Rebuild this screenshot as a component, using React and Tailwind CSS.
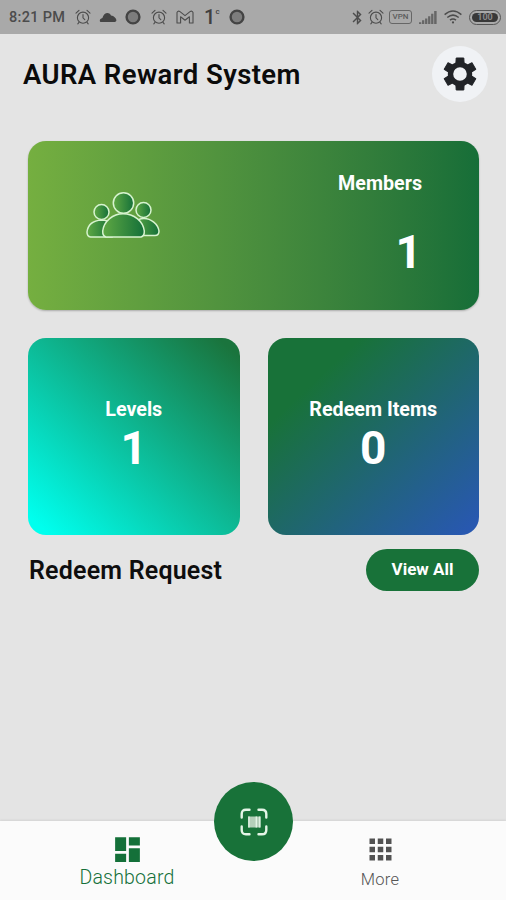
import { MdDashboard, MdApps, MdBluetooth } from "react-icons/md";

const TEETH = [0, 60, 120, 180, 240, 300];

function AlarmIcon({ className }) {
  return (
    <svg viewBox="0 0 16 16" className={className} fill="none" stroke="currentColor" strokeWidth="1.1" strokeLinecap="round">
      <circle cx="8" cy="8.7" r="5.6" />
      <path d="M1 4.2 L4 1.4 M15 4.2 L12 1.4 M8 5.6 V8.8 L9.8 10.6 M4 13.4 L2.8 14.8 M12 13.4 L13.2 14.8" />
    </svg>
  );
}

function RingIcon() {
  return (
    <svg viewBox="0 0 16 16" className="size-4">
      <circle cx="8" cy="8" r="6.4" fill="#7d7d7d" stroke="#444" strokeWidth="2.4" />
    </svg>
  );
}

function GearIcon() {
  return (
    <svg viewBox="-18 -18 36 36" className="size-9">
      <g fill="#212327" stroke="#212327" strokeWidth="1" strokeLinejoin="round">
        {TEETH.map((deg) => (
          <path key={deg} d="M-4.2 -9 L-3.8 -16 H3.8 L4.2 -9Z" transform={`rotate(${deg})`} />
        ))}
      </g>
      <circle r="9.5" fill="none" stroke="#212327" strokeWidth="5.4" />
    </svg>
  );
}

function StatusBar() {
  return (
    <div className="flex h-[34px] items-center justify-between bg-[#a9a9a9] pl-[9px] pr-[5px] text-[#4c4c4c]">
      <div className="flex items-center">
        <span className="w-[66px] whitespace-nowrap pt-[2px] text-[14.5px] font-medium tracking-[0.3px]">8:21 PM</span>
        <AlarmIcon className="size-4" />
        <svg viewBox="0 0 18 10" className="ml-2 mr-2 h-[10px] w-[18px]" fill="#444">
          <path d="M1.5 10 C0 9 1 6.5 3.4 6 C4.6 1 9.6 -1 12 3.4 C15 3.6 17 6 17.4 8 Q17.6 9.6 16 10Z" />
        </svg>
        <RingIcon />
        <AlarmIcon className="ml-[10px] size-4" />
        <svg viewBox="0 0 18 14" className="ml-[9px] h-[14px] w-[18px]" fill="none" stroke="currentColor" strokeWidth="1.1" strokeLinejoin="round">
          <path d="M1 13 V2.4 Q2 .4 4 1.6 L9 5.6 L14 1.6 Q16 .4 17 2.4 V13 H13.4 V6.8 L9 10.2 L4.6 6.8 V13Z" />
        </svg>
        <span className="ml-[10px] flex w-[14px] items-start text-[20px] font-medium leading-[18px] text-[#404040]">
          1<span className="text-[8px] leading-[8px]">c</span>
        </span>
        <div className="ml-[11px]">
          <RingIcon />
        </div>
      </div>
      <div className="flex items-center">
        <MdBluetooth className="mr-[2px] size-[17px]" />
        <AlarmIcon className="mr-[5px] size-4" />
        <span className="mr-[7px] flex h-[14px] w-[23px] items-center justify-center rounded-[3px] border border-[#666] text-[8px] font-medium leading-none text-[#5c5c5c]">VPN</span>
        <svg viewBox="0 0 19 14" preserveAspectRatio="none" className="mr-[7px] h-[13px] w-[18px]" fill="#666">
          <path d="M0 14 V12 H2.4 V14Z M3.2 14 V10 H5.6 V14Z M6.4 14 V8 H8.8 V14Z M9.6 14 V5.6 H12 V14Z M12.8 14 V3 H15.2 V14Z M16 14 V0 H18.6 V14Z" />
        </svg>
        <svg viewBox="0 0 18 14" className="mr-[7px] h-[14px] w-[18px]" fill="none" stroke="currentColor" strokeWidth="1.5">
          <path d="M.6 4.6 Q9 -2.6 17.4 4.6 M3.3 7.5 Q9 2.8 14.7 7.5 M6 10.2 Q9 7.8 12 10.2" />
          <circle cx="9" cy="12.4" r="1.1" fill="currentColor" stroke="none" />
        </svg>
        <span className="flex h-[15px] w-[32px] items-center rounded-full border border-[#555] p-[2px]">
          <span className="flex h-full w-full items-center justify-center rounded-full bg-[#383838] text-[9px] font-bold leading-none text-[#8a8a8a]">100</span>
        </span>
      </div>
    </div>
  );
}

function MembersIcon() {
  return (
    <svg viewBox="0 0 74 46" className="h-[46px] w-[74px]" stroke="#d7f3cf" strokeWidth="1.5">
      <defs>
        <linearGradient id="people">
          <stop offset="0" stopColor="#5fa843" />
          <stop offset="1" stopColor="#147039" />
        </linearGradient>
      </defs>
      <path d="M4.5 45 Q1 44.5 1 40 C2 32 8 28.5 15.5 28 Q22 28 26 32 V45Z" fill="url(#people)" />
      <path d="M48 31 Q52 26.5 58 26.5 C65 26.5 72 32 73 39 Q73 43.5 69 43.5 H50Z" fill="url(#people)" />
      <circle cx="15.5" cy="20" r="7.5" fill="url(#people)" />
      <circle cx="57.5" cy="18" r="7.5" fill="url(#people)" />
      <path d="M20 45 Q16.5 44 16.7 39 C18 29 27 21.8 37 21.8 C48 21.8 57 29 58.3 39 Q58.5 44 55 45Z" fill="url(#people)" />
      <circle cx="37.5" cy="11" r="10.2" fill="url(#people)" />
    </svg>
  );
}

function StatCard({ label, value, className }) {
  return (
    <div className={`flex h-[197px] flex-col items-center rounded-[18px] pt-[60px] text-white ${className}`}>
      <div className="text-[19.7px] font-bold leading-6">{label}</div>
      <div className="mt-px text-[46px] font-bold leading-[50px]">{value}</div>
    </div>
  );
}

function ScanIcon() {
  return (
    <svg viewBox="0 0 28 28" className="size-7" fill="none" stroke="#e4f5e7" strokeWidth="2.4" strokeLinecap="round">
      <path d="M1.7 9.5 V6 Q1.7 1.7 6 1.7 H9.5 M18.5 1.7 H22 Q26.3 1.7 26.3 6 V9.5 M26.3 18.5 V22 Q26.3 26.3 22 26.3 H18.5 M9.5 26.3 H6 Q1.7 26.3 1.7 22 V18.5" />
      <path d="M8 8.5 H20.5 V19.5 H8Z" fill="#b5cfba" stroke="none" />
      <path d="M9 8.5 V19.5 M16.3 8.5 V19.5 M19.8 8.5 V19.5" strokeWidth="1.3" strokeLinecap="butt" />
    </svg>
  );
}

function BottomNav() {
  return (
    <nav className="relative flex h-[79px] bg-[#fbfbfb] shadow-[0_-1px_2px_rgba(0,0,0,0.08)]">
      <div className="flex w-[254px] flex-col items-center pt-[12px] text-[#147039]">
        <MdDashboard className="size-[33px]" />
        <span className="text-[19.5px] font-light leading-6 tracking-[0.2px]">Dashboard</span>
      </div>
      <div className="flex w-[252px] flex-col items-center pt-[12px] text-[#525252]">
        <MdApps className="size-[33px]" />
        <span className="mt-[2px] text-[16.5px] font-light leading-6 tracking-[0.3px] text-[#555]">More</span>
      </div>
      <div className="absolute left-[214px] top-[-39px] flex size-[79px] items-center justify-center rounded-full bg-[#187239]">
        <ScanIcon />
      </div>
    </nav>
  );
}

export default function App() {
  return (
    <div className="flex h-[900px] w-[506px] flex-col overflow-hidden bg-[#e4e4e4] font-[Roboto,sans-serif]">
      <StatusBar />
      <header className="flex h-[80px] items-center justify-between pl-[23px] pr-[18px]">
        <h1 className="whitespace-nowrap pt-px text-[27.5px] font-semibold tracking-[0.4px] text-[#0b0b0b]">AURA Reward System</h1>
        <div className="flex size-14 items-center justify-center rounded-full bg-[#f0f2f5]">
          <GearIcon />
        </div>
      </header>
      <main className="flex-1 pl-[28px] pr-[27px] pt-[27px]">
        <section className="flex h-[169px] justify-between rounded-[18px] bg-linear-to-r from-[#75af40] to-[#166e38] pl-[58px] text-white shadow-[0_1px_2px_rgba(0,0,0,0.25)]">
          <div className="pt-[51px]">
            <MembersIcon />
          </div>
          <div className="flex flex-col items-end pr-[57px] pt-[31px] font-bold">
            <div className="text-[19.7px] leading-6">Members</div>
            <div className="mt-[31px] text-[46px] leading-[50px]">1</div>
          </div>
        </section>
        <div className="mt-[28px] grid grid-cols-2 gap-[28px]">
          <StatCard label="Levels" value="1" className="bg-[linear-gradient(to_top_right,#00ffee_5%,#1a743d_95%)]" />
          <StatCard label="Redeem Items" value="0" className="bg-[linear-gradient(to_bottom_right,#187239_22%,#2858b0_96%)]" />
        </div>
        <div className="mt-[14px] flex items-center justify-between">
          <h2 className="pl-px pt-[2px] text-[25px] font-semibold tracking-[0.2px] text-[#0e0e0e]">Redeem Request</h2>
          <button className="h-[42px] w-[113px] rounded-full bg-[#187239] text-[17px] font-bold text-white">View All</button>
        </div>
      </main>
      <BottomNav />
    </div>
  );
}
